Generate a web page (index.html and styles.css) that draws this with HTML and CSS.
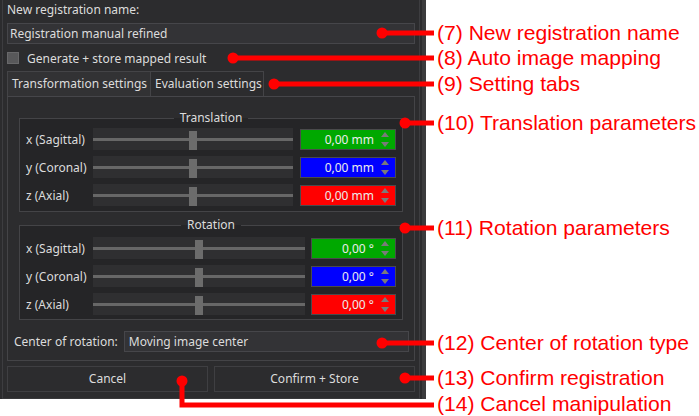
FILE: index.html
```html
<!DOCTYPE html>
<html lang="en">
<head>
<meta charset="utf-8">
<title>Registration manual refinement</title>
<link rel="stylesheet" href="styles.css">
</head>
<body>
<div class="stage">
  <div class="panel">
    <div class="frame">
      <div class="field-label">New registration name:</div>
      <div class="text-input">Registration manual refined</div>
      <div class="check-row"><span class="checkbox"></span><span>Generate + store mapped result</span></div>
      <div class="tabs">
        <div class="tab active">Transformation settings</div>
        <div class="tab">Evaluation settings</div>
      </div>
      <div class="pane">
        <fieldset class="group group-translation">
          <legend>Translation</legend>
          <div class="param-row">
            <span class="param-label">x (Sagittal)</span>
            <div class="slider"><span class="groove"></span><span class="handle"></span></div>
            <div class="spin spin-mm green"><span class="spin-value">0,00 mm</span><span class="arrows"><span class="up"></span><span class="down"></span></span></div>
          </div>
          <div class="param-row">
            <span class="param-label">y (Coronal)</span>
            <div class="slider"><span class="groove"></span><span class="handle"></span></div>
            <div class="spin spin-mm blue"><span class="spin-value">0,00 mm</span><span class="arrows"><span class="up"></span><span class="down"></span></span></div>
          </div>
          <div class="param-row">
            <span class="param-label">z (Axial)</span>
            <div class="slider"><span class="groove"></span><span class="handle"></span></div>
            <div class="spin spin-mm red"><span class="spin-value">0,00 mm</span><span class="arrows"><span class="up"></span><span class="down"></span></span></div>
          </div>
        </fieldset>
        <fieldset class="group group-rotation">
          <legend>Rotation</legend>
          <div class="param-row">
            <span class="param-label">x (Sagittal)</span>
            <div class="slider"><span class="groove"></span><span class="handle"></span></div>
            <div class="spin spin-deg green"><span class="spin-value">0,00 °</span><span class="arrows"><span class="up"></span><span class="down"></span></span></div>
          </div>
          <div class="param-row">
            <span class="param-label">y (Coronal)</span>
            <div class="slider"><span class="groove"></span><span class="handle"></span></div>
            <div class="spin spin-deg blue"><span class="spin-value">0,00 °</span><span class="arrows"><span class="up"></span><span class="down"></span></span></div>
          </div>
          <div class="param-row">
            <span class="param-label">z (Axial)</span>
            <div class="slider"><span class="groove"></span><span class="handle"></span></div>
            <div class="spin spin-deg red"><span class="spin-value">0,00 °</span><span class="arrows"><span class="up"></span><span class="down"></span></span></div>
          </div>
        </fieldset>
        <div class="center-row">
          <span class="center-label">Center of rotation:</span>
          <div class="combo">Moving image center</div>
        </div>
      </div>
      <div class="buttons">
        <div class="btn">Cancel</div>
        <div class="btn">Confirm + Store</div>
      </div>
    </div>
  </div>

  <svg class="callout-lines" width="699" height="416" viewBox="0 0 699 416">
    <g stroke="#ff0000" stroke-width="5" fill="none">
      <path d="M382 33H434"/>
      <path d="M233 58H434"/>
      <path d="M274 84H434"/>
      <path d="M405 123H434"/>
      <path d="M405 228H434"/>
      <path d="M382 343H434"/>
      <path d="M405 378H434"/>
      <path d="M182 381V405H434"/>
    </g>
    <g fill="#ff0000">
      <circle cx="382" cy="33" r="5.5"/>
      <circle cx="233" cy="58" r="5.5"/>
      <circle cx="274" cy="84" r="5.5"/>
      <circle cx="405" cy="123" r="5.5"/>
      <circle cx="405" cy="228" r="5.5"/>
      <circle cx="382" cy="343" r="5.5"/>
      <circle cx="405" cy="378" r="5.5"/>
      <circle cx="182" cy="381" r="5.5"/>
    </g>
  </svg>

  <div class="callouts">
    <div class="callout c7">(7) New registration name</div>
    <div class="callout c8">(8) Auto image mapping</div>
    <div class="callout c9">(9) Setting tabs</div>
    <div class="callout c10">(10) Translation parameters</div>
    <div class="callout c11">(11) Rotation parameters</div>
    <div class="callout c12">(12) Center of rotation type</div>
    <div class="callout c13">(13) Confirm registration</div>
    <div class="callout c14">(14) Cancel manipulation</div>
  </div>
</div>
</body>
</html>
```

FILE: styles.css
```css
* { box-sizing: border-box; }

html, body {
  margin: 0;
  padding: 0;
  background: #ffffff;
}

.stage {
  position: relative;
  width: 699px;
  height: 416px;
  overflow: hidden;
  font-family: "Noto Sans", "DejaVu Sans", sans-serif;
  font-size: 12px;
  color: #dcdcdc;
}

.panel {
  width: 426px;
  height: 399px;
  background: #2c2c2e;
  padding: 0 2px;
  border-right: 4px solid #3b3b3d;
}

.frame {
  height: 100%;
  border-left: 1px solid #3d3d40;
  border-right: 1px solid #3d3d40;
  border-bottom: 1px solid #38383a;
  padding: 2px 4px 0 4px;
  display: flex;
  flex-direction: column;
}

.field-label {
  line-height: 16px;
  height: 16px;
}

.text-input {
  margin-top: 5px;
  height: 21px;
  line-height: 19px;
  background: #333336;
  border: 1px solid #46464a;
  padding-left: 2px;
}

.check-row {
  margin-top: 6px;
  height: 16px;
  display: flex;
  align-items: center;
  gap: 8px;
}

.checkbox {
  width: 12px;
  height: 12px;
  background: #58585a;
  border: 1px solid #68686a;
}

.tabs {
  margin-top: 5px;
  display: flex;
  height: 25px;
}

.tab {
  height: 25px;
  line-height: 23px;
  padding: 0 4px;
  border: 1px solid #444447;
  border-bottom: none;
  background: #2c2c2e;
  white-space: nowrap;
  overflow: hidden;
}

.tab.active {
  width: 143px;
  padding-left: 4px;
  padding-right: 0;
  background: #323234;
  border-right: none;
}

.tab + .tab {
  width: 114px;
}

.pane {
  height: 265px;
  border: 1px solid #444447;
  border-top-color: #46464a;
  padding: 13px 11px 0 11px;
  display: flex;
  flex-direction: column;
}

.group {
  margin: 0;
  border: 1px solid #444447;
  background: #252527;
  padding: 2px 6px 5px 6px;
  display: flex;
  flex-direction: column;
  gap: 6px;
  min-width: 0;
}

.group legend {
  margin: 0 auto;
  padding: 0 6px;
  line-height: 16px;
  color: #dcdcdc;
}

.group-rotation {
  margin-top: 5px;
  padding-top: 4px;
  padding-bottom: 4px;
}

.param-row {
  display: flex;
  align-items: center;
  height: 22px;
}

.param-label {
  width: 67px;
  flex: none;
  white-space: nowrap;
}

.slider {
  flex: 1;
  height: 22px;
  position: relative;
  background: #2f2f31;
  display: flex;
  align-items: center;
  justify-content: center;
}

.groove {
  position: absolute;
  left: 0;
  right: 0;
  top: 10px;
  height: 3px;
  background: #676767;
}

.handle {
  position: relative;
  width: 8px;
  height: 19px;
  margin-top: 3px;
  background: #6c6c6c;
}

.spin {
  flex: none;
  height: 21px;
  margin-left: 7px;
  border: 1px solid #4a4a4c;
  display: flex;
  align-items: center;
  justify-content: flex-end;
  color: #ececec;
}

.spin-mm { width: 96px; }
.spin-deg { width: 85px; margin-left: 6px; }

.green { background: #00a800; }
.blue  { background: #0000ff; }
.red   { background: #ff0000; }

.spin-value {
  line-height: 19px;
  white-space: nowrap;
}

.arrows {
  width: 20px;
  display: flex;
  flex-direction: column;
  align-items: center;
  gap: 5px;
  margin-left: 1px;
}

.up, .down {
  width: 0;
  height: 0;
  border-left: 4.5px solid transparent;
  border-right: 4.5px solid transparent;
}

.up { border-bottom: 5px solid #7a7a7a; }
.down { border-top: 5px solid #7a7a7a; }

.center-row {
  margin: 11px -6px 0 -5px;
  display: flex;
  align-items: center;
  gap: 6px;
}

.center-label {
  white-space: nowrap;
}

.combo {
  flex: 1;
  height: 21px;
  line-height: 19px;
  background: #333336;
  border: 1px solid #46464a;
  padding-left: 4px;
}

.buttons {
  margin-top: 5px;
  display: flex;
  gap: 6px;
}

.btn {
  height: 26px;
  line-height: 24px;
  text-align: center;
  border: 1px solid #3f3f42;
  background: #2c2c2e;
}

.btn:first-child { width: 201px; }
.btn:last-child { width: 201px; }

.callout-lines {
  position: absolute;
  left: 0;
  top: 0;
  pointer-events: none;
}

.callouts {
  position: absolute;
  left: 437px;
  top: 0;
  right: 0;
  bottom: 0;
}

.callout {
  position: absolute;
  left: 0;
  white-space: nowrap;
  font-family: "Liberation Sans", Arial, sans-serif;
  font-size: 21.1px;
  line-height: 24px;
  color: #ff0000;
}

.c7  { top: 21px; }
.c8  { top: 46px; }
.c9  { top: 72px; }
.c10 { top: 111px; }
.c11 { top: 216px; }
.c12 { top: 331px; }
.c13 { top: 366px; }
.c14 { top: 392px; }
```
